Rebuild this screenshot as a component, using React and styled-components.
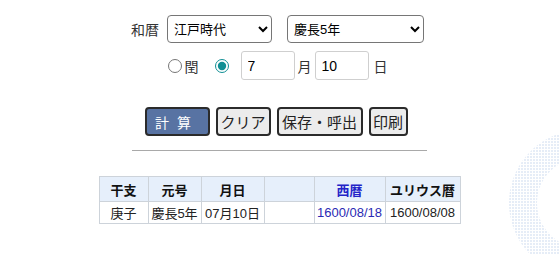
import { createGlobalStyle, styled } from "styled-components";

const GlobalStyle = createGlobalStyle`
  html, body {
    margin: 0;
    padding: 0;
    background: #fff;
  }
  body {
    font-family: "Liberation Sans", "Noto Sans CJK JP", sans-serif;
    color: #333;
    overflow: hidden;
    width: 559px;
    height: 254px;
    position: relative;
  }
`;

const Page = styled.div`
  display: flex;
  flex-direction: column;
  align-items: center;
  padding-top: 15px;
`;

const Row = styled.div`
  display: flex;
  align-items: center;
  height: ${(p) => p.$h || 28}px;
  margin-top: ${(p) => p.$mt || 0}px;
  margin-right: ${(p) => p.$shift || 0}px;
`;

const Label = styled.span`
  font-size: 14px;
  color: #333;
  margin-left: ${(p) => p.$ml || 0}px;
  margin-right: ${(p) => p.$mr || 0}px;
`;

const Select = styled.select`
  height: 28px;
  width: ${(p) => p.$w}px;
  margin-left: ${(p) => p.$ml || 0}px;
  font-family: "Liberation Sans", "Noto Sans CJK JP", sans-serif;
  font-size: 13px;
  color: #000;
  border: 1px solid #767676;
  border-radius: 4px;
  background: #fff;
  padding: 0 2px;
`;

const Radio = styled.input.attrs({ type: "radio", name: "leap" })`
  width: 14px;
  height: 14px;
  margin: 0;
  margin-left: ${(p) => p.$ml || 0}px;
  accent-color: #108f94;
`;

const NumInput = styled.input`
  width: 54px;
  height: 29px;
  box-sizing: border-box;
  border: 1px solid #cfcfcf;
  border-radius: 3px;
  padding: 0 6px;
  font-family: "Liberation Sans", "Noto Sans CJK JP", sans-serif;
  font-size: 14px;
  color: #000;
  margin-left: ${(p) => p.$ml || 0}px;
`;

const Buttons = styled.div`
  display: flex;
  gap: 6px;
  margin-top: 27px;
  margin-right: 7px;
`;

const Button = styled.button`
  height: 29px;
  box-sizing: border-box;
  padding: 0;
  border: 2px solid #2b2b2b;
  border-radius: 4px;
  background: ${(p) => (p.$primary ? "#5873a3" : "#ececec")};
  color: ${(p) => (p.$primary ? "#fff" : "#222")};
  font-family: "Liberation Sans", "Noto Sans CJK JP", sans-serif;
  font-size: ${(p) => (p.$primary ? 14 : 15)}px;
  letter-spacing: ${(p) => (p.$primary ? "8px" : "0")};
  width: ${(p) => p.$w}px;
  cursor: pointer;
  white-space: nowrap;
`;

const Rule = styled.hr`
  width: 295px;
  border: 0;
  border-top: 1px solid #a9a9a9;
  margin: 14px 0 0 0;
`;

const Table = styled.table`
  margin-top: 25px;
  border-collapse: collapse;
  font-size: 13px;
  color: #222;
  table-layout: fixed;
  width: 361px;
`;

const Th = styled.th`
  background: #e6effb;
  border: 1px solid #cdd3da;
  height: 24px;
  padding: 0;
  font-weight: bold;
  color: ${(p) => (p.$blue ? "#2323c8" : "#111")};
  text-align: center;
`;

const Td = styled.td`
  border: 1px solid #cdd3da;
  height: 21px;
  padding: 0 2px;
  text-align: center;
  white-space: nowrap;
  color: ${(p) => (p.$blue ? "#2a2ab4" : "#222")};
`;

const Deco = styled.svg`
  position: absolute;
  right: 0;
  bottom: 0;
  pointer-events: none;
`;

const cols = [49, 53, 63, 50, 71, 75];

export default function App() {
  return (
    <>
      <GlobalStyle />
      <Deco width="60" height="120" viewBox="500 134 60 120">
        <defs>
          <pattern id="dots" width="3" height="3" patternUnits="userSpaceOnUse">
            <rect width="2" height="2" fill="#e6edf7" />
          </pattern>
        </defs>
        <path
          d="M 583 130 a 73 73 0 1 0 0.01 0 Z M 583 158 a 45 45 0 1 1 -0.01 0 Z"
          fill="url(#dots)"
          fillRule="evenodd"
        />
      </Deco>
      <Page>
        <Row $shift={4}>
          <Label $mr={8}>和暦</Label>
          <Select $w={105} defaultValue="edo">
            <option value="edo">江戸時代</option>
          </Select>
          <Select $w={137} $ml={15} defaultValue="k5">
            <option value="k5">慶長5年</option>
          </Select>
        </Row>
        <Row $h={29} $mt={8} $shift={4}>
          <Radio />
          <Label $ml={3}>閏</Label>
          <Radio $ml={16} defaultChecked />
          <NumInput $ml={12} defaultValue="7" />
          <Label $ml={3}>月</Label>
          <NumInput $ml={3} defaultValue="10" />
          <Label $ml={5}>日</Label>
        </Row>
        <Buttons>
          <Button $primary $w={65}>計算</Button>
          <Button $w={55}>クリア</Button>
          <Button $w={86}>保存・呼出</Button>
          <Button $w={39}>印刷</Button>
        </Buttons>
        <Rule />
        <Table>
          <colgroup>
            {cols.map((w, i) => (
              <col key={i} style={{ width: w }} />
            ))}
          </colgroup>
          <thead>
            <tr>
              <Th>干支</Th>
              <Th>元号</Th>
              <Th>月日</Th>
              <Th></Th>
              <Th $blue>西暦</Th>
              <Th>ユリウス暦</Th>
            </tr>
          </thead>
          <tbody>
            <tr>
              <Td>庚子</Td>
              <Td>慶長5年</Td>
              <Td>07月10日</Td>
              <Td></Td>
              <Td $blue>1600/08/18</Td>
              <Td>1600/08/08</Td>
            </tr>
          </tbody>
        </Table>
      </Page>
    </>
  );
}
